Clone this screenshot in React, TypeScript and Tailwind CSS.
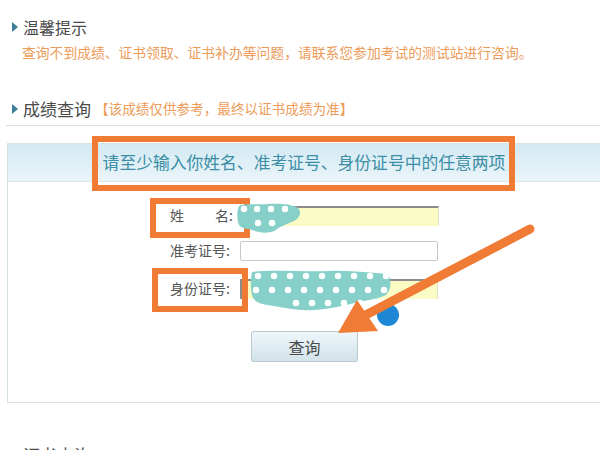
import React from "react";

const dotsRow1 = [
  [244, 209], [257, 209], [271, 209], [285, 209],
  [258, 223], [272, 223],
];

function Blob({ className, w, h, path, dots }: { className: string; w: number; h: number; path: string; dots: number[][] }) {
  return (
    <svg className={className} width={w} height={h} viewBox={`0 0 ${w} ${h}`}>
      <path d={path} fill="#86d0c9" />
      {dots.map(([x, y], i) => (
        <circle key={i} cx={x} cy={y} r={3.2} fill="#ffffff" />
      ))}
    </svg>
  );
}

function Heading({ children, size }: { children: React.ReactNode; size: string }) {
  return (
    <div className="flex items-center gap-[5px]">
      <span className="w-0 h-0 border-y-[5px] border-y-transparent border-l-[6px] border-l-[#3d7f98]" />
      <span className={`${size} text-[#4a4a4a] leading-none`}>{children}</span>
    </div>
  );
}

export default function App() {
  const row1 = dotsRow1.map(([x, y]) => [x - 236, y - 202]);
  const row3: number[][] = [];
  for (let i = 0; i < 9; i++) row3.push([8 + i * 16, 6]);
  for (let i = 0; i < 9; i++) row3.push([6 + i * 16, 20]);
  for (let i = 0; i < 5; i++) row3.push([46 + i * 16, 33]);

  return (
    <div
      className="relative w-[600px] h-[450px] overflow-hidden bg-white"
      style={{ fontFamily: '"Noto Sans CJK SC", "Noto Sans", sans-serif' }}
    >
      <div className="pl-[12px] pt-[19px]">
        <Heading size="text-[16px]">温馨提示</Heading>
        <p className="mt-[7px] pl-[10px] text-[13.8px] leading-[20px] text-[#ec9b58]">
          查询不到成绩、证书领取、证书补办等问题，请联系您参加考试的测试站进行咨询。
        </p>
      </div>

      <div className="ml-[6px] mt-[38px] pl-[6px] pb-[8px] border-b border-[#dedede] flex items-center">
        <Heading size="text-[17px]">成绩查询</Heading>
        <span className="ml-[4px] text-[13.6px] text-[#ec9b58] leading-none">【该成绩仅供参考，最终以证书成绩为准】</span>
      </div>

      <div className="ml-[7px] mt-[17px] h-[260px] border border-[#d7e2e8] border-r-0">
        <div className="h-[38px] flex items-center justify-center bg-gradient-to-b from-[#d3e9f3] to-[#eaf5f9] border-b border-[#dbe7ee]">
          <span className="text-[16.8px] text-[#3b8ea6] leading-none">请至少输入你姓名、准考证号、身份证号中的任意两项</span>
        </div>

        <div className="pl-[157px] pt-[23px] flex flex-col">
          <div className="flex items-center h-[21px]">
            <label className="w-[75px] text-[14px] text-[#555] pl-[5px] flex justify-between pr-[7px]">
              <span>姓</span>
              <span>名:</span>
            </label>
            <div className="w-[199px] h-[20px] bg-[#fbfbc6] border-t-2 border-[#8c8c8c] border-x border-x-[#e0e0c8]" />
          </div>
          <div className="flex items-center h-[21px] mt-[14px]">
            <label className="w-[75px] text-[14px] text-[#555] pl-[5px]">准考证号:</label>
            <div className="w-[198px] h-[20px] bg-white border border-[#c9c9c9] rounded-[2px]" />
          </div>
          <div className="flex items-center h-[21px] mt-[17px]">
            <label className="w-[75px] text-[14px] text-[#555] pl-[5px]">身份证号:</label>
            <div className="w-[198px] h-[20px] bg-[#fbfbc6] border-t-2 border-l-2 border-[#8c8c8c] border-r border-r-[#e0e0c8]" />
          </div>
          <button className="ml-[86px] mt-[32px] w-[107px] h-[31px] rounded-[2px] border border-[#bccbd3] bg-gradient-to-b from-[#eef6fa] to-[#d2e3ea] text-[16px] text-[#4a4a4a]">
            查询
          </button>
        </div>
      </div>

      <div className="pl-[12px] mt-[43px]">
        <Heading size="text-[17px]">证书查询</Heading>
      </div>

      {/* annotations */}
      <div className="absolute left-[92px] top-[136px] w-[423px] h-[55px] border-[6px] border-[#f07b34]" />
      <div className="absolute left-[150px] top-[198px] w-[100px] h-[40px] border-[6px] border-[#f07b34]" />
      <div className="absolute left-[152px] top-[268px] w-[96px] h-[44px] border-[6px] border-[#f07b34]" />

      <Blob
        className="absolute left-[236px] top-[202px]"
        w={66}
        h={32}
        path="M3 4 C10 1 22 3 32 2 C44 1 56 2 62 6 C66 10 64 16 58 19 C52 22 44 24 40 28 C34 32 22 31 16 28 C10 26 3 27 2 20 C1 14 1 8 3 4 Z"
        dots={row1}
      />
      <Blob
        className="absolute left-[250px] top-[270px]"
        w={142}
        h={41}
        path="M2 2 C20 -1 50 2 80 1 C100 0 120 3 138 4 C142 10 141 20 136 25 C128 29 118 30 108 32 C96 35 82 39 64 40 C48 41 36 38 24 36 C12 34 4 33 2 25 C0 16 1 8 2 2 Z"
        dots={row3}
      />

      <svg className="absolute left-0 top-0" width={600} height={450} viewBox="0 0 600 450">
        <circle cx={388} cy={315} r={11} fill="#1e88d6" />
        <line x1={530} y1={229} x2={360} y2={318} stroke="#f07b34" strokeWidth={9} strokeLinecap="round" />
        <polygon points="338,333 357,300 378,331" fill="#f07b34" />
      </svg>
    </div>
  );
}
